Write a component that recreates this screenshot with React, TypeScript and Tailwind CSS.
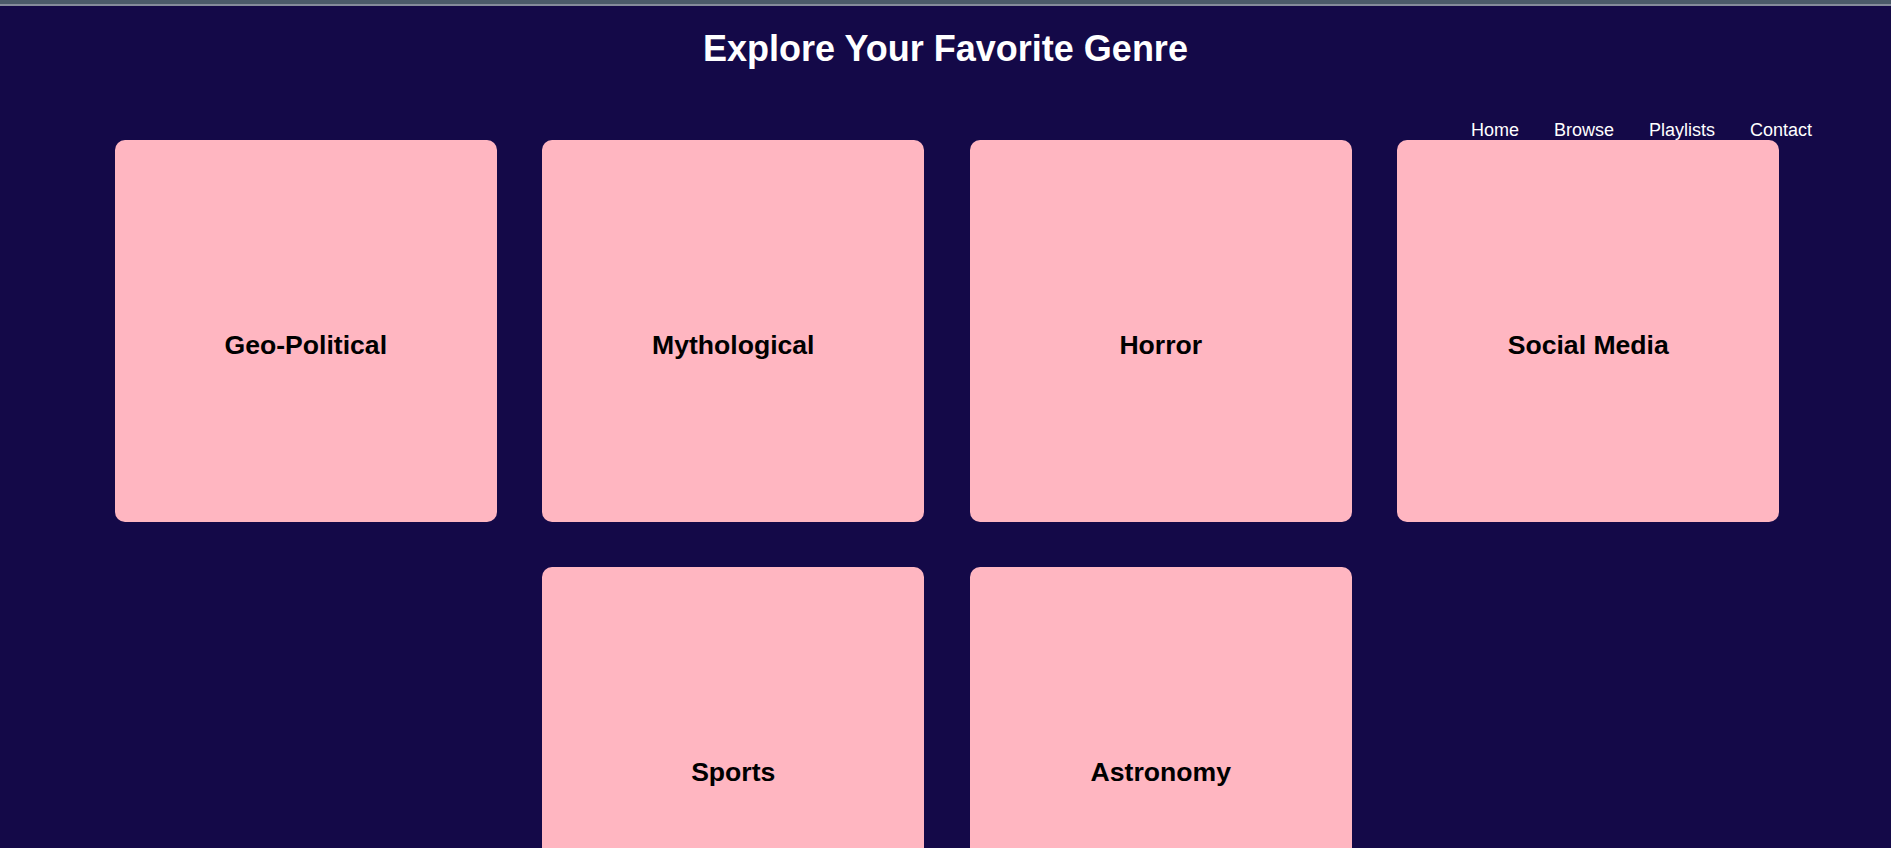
import React from "react";

const genres = ["Geo-Political", "Mythological", "Horror", "Social Media", "Sports", "Astronomy"];

export default function App() {
  return (
    <div className="min-h-screen bg-[#140948] font-['Liberation_Sans',Arial,sans-serif]">
      <div className="h-[4px] bg-[#4b5a69]" />
      <div className="h-[2px] bg-[#858b9b]" />
      <h1 className="pt-[23px] text-center text-[36px] font-bold leading-[40px] text-white">
        Explore Your Favorite Genre
      </h1>
      <nav className="mt-[51px] flex h-[20px] justify-end gap-[35px] pr-[79px] text-[18px] leading-[20px] text-white">
        <a>Home</a>
        <a>Browse</a>
        <a>Playlists</a>
        <a>Contact</a>
      </nav>
      <div className="flex flex-wrap justify-center gap-x-[45.5px] gap-y-[45px] pl-[3px] pb-[40px]">
        {genres.map((g) => (
          <div
            key={g}
            className="flex h-[382px] w-[382px] items-center justify-center rounded-[10px] bg-[#ffb6c1] pt-[30px]"
          >
            <h3 className="text-[26.6px] font-bold text-black">{g}</h3>
          </div>
        ))}
      </div>
    </div>
  );
}
